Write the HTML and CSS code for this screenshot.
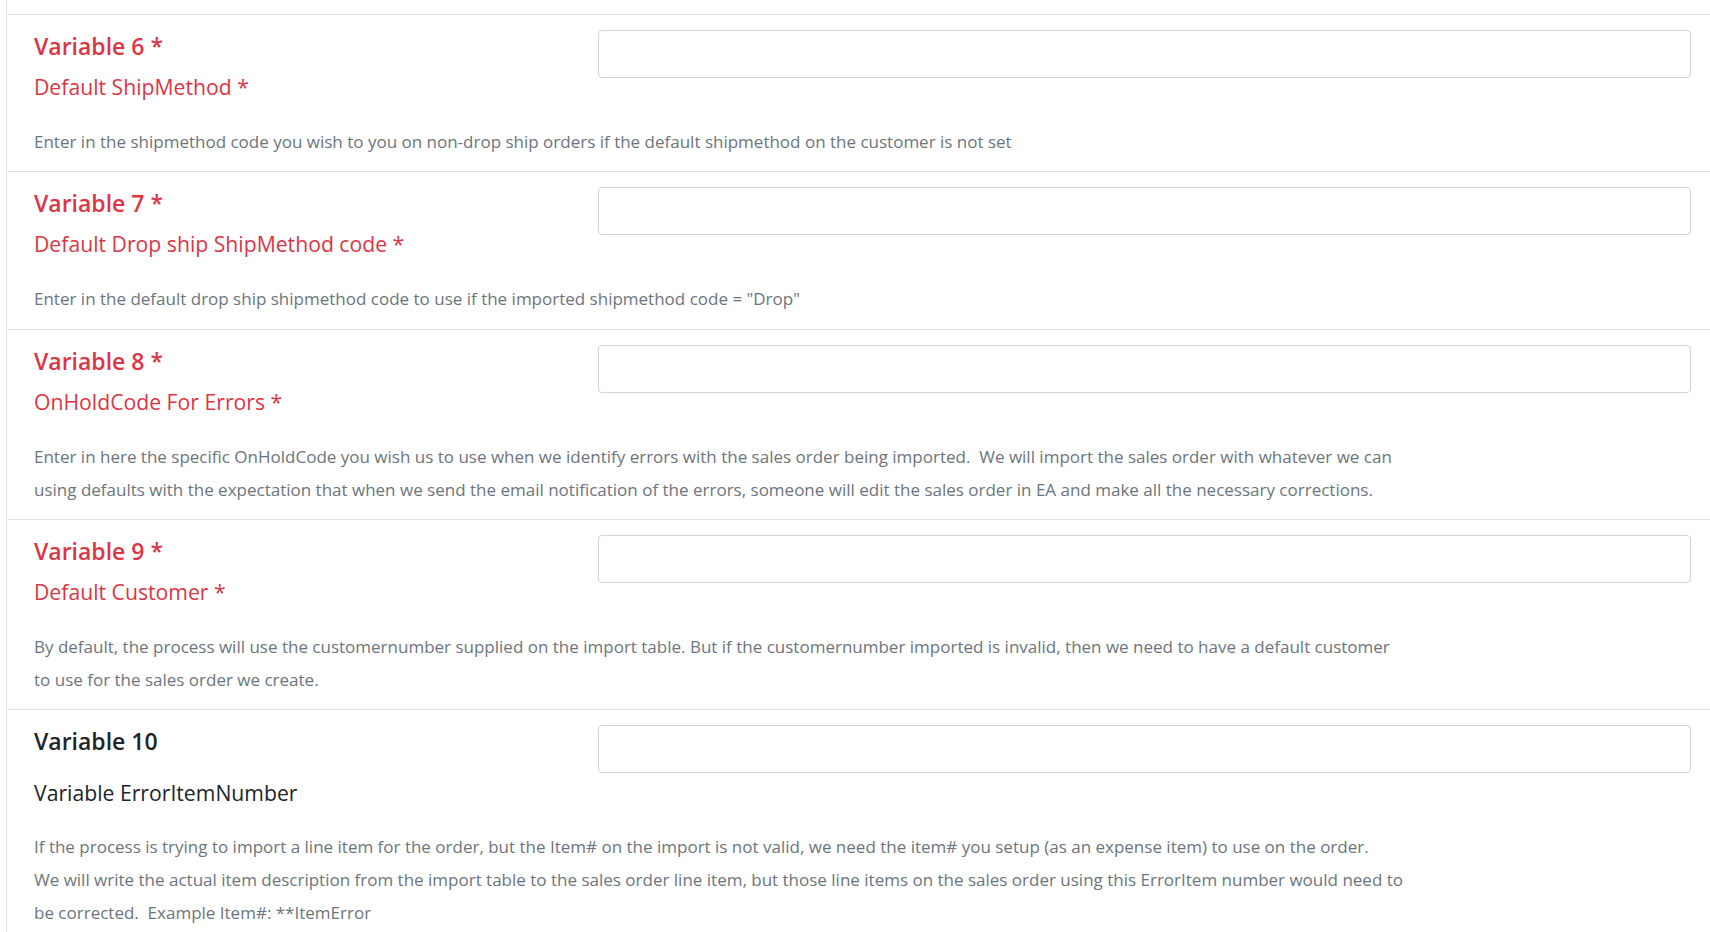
FILE: index.html
```html
<!DOCTYPE html>
<html lang="en">
<head>
    <meta charset="UTF-8">
    <meta name="viewport" content="width=device-width, initial-scale=1.0">
    <title>Process Variables</title>
    <link rel="stylesheet" href="styles.css">
</head>
<body>
    <div id="variables-panel">
        <div class="var-row">
            <div class="var-head">
                <div class="var-labels">
                    <h5 class="var-title required">Variable 6 *</h5>
                    <label class="var-name required" for="var6">Default ShipMethod *</label>
                </div>
                <input type="text" id="var6" class="var-input">
            </div>
            <p class="var-desc">Enter in the shipmethod code you wish to you on non-drop ship orders if the default shipmethod on the customer is not set</p>
        </div>

        <div class="var-row">
            <div class="var-head">
                <div class="var-labels">
                    <h5 class="var-title required">Variable 7 *</h5>
                    <label class="var-name required" for="var7">Default Drop ship ShipMethod code *</label>
                </div>
                <input type="text" id="var7" class="var-input">
            </div>
            <p class="var-desc">Enter in the default drop ship shipmethod code to use if the imported shipmethod code = "Drop"</p>
        </div>

        <div class="var-row">
            <div class="var-head">
                <div class="var-labels">
                    <h5 class="var-title required">Variable 8 *</h5>
                    <label class="var-name required" for="var8">OnHoldCode For Errors *</label>
                </div>
                <input type="text" id="var8" class="var-input">
            </div>
            <p class="var-desc">Enter in here the specific OnHoldCode you wish us to use when we identify errors with the sales order being imported.&nbsp; We will import the sales order with whatever we can<br>using defaults with the expectation that when we send the email notification of the errors, someone will edit the sales order in EA and make all the necessary corrections.</p>
        </div>

        <div class="var-row">
            <div class="var-head">
                <div class="var-labels">
                    <h5 class="var-title required">Variable 9 *</h5>
                    <label class="var-name required" for="var9">Default Customer *</label>
                </div>
                <input type="text" id="var9" class="var-input">
            </div>
            <p class="var-desc">By default, the process will use the customernumber supplied on the import table. But if the customernumber imported is invalid, then we need to have a default customer<br>to use for the sales order we create.</p>
        </div>

        <div class="var-row optional">
            <div class="var-head">
                <div class="var-labels">
                    <h5 class="var-title">Variable 10</h5>
                    <label class="var-name" for="var10">Variable ErrorItemNumber</label>
                </div>
                <input type="text" id="var10" class="var-input">
            </div>
            <p class="var-desc">If the process is trying to import a line item for the order, but the Item# on the import is not valid, we need the item# you setup (as an expense item) to use on the order.<br>We will write the actual item description from the import table to the sales order line item, but those line items on the sales order using this ErrorItem number would need to<br>be corrected.&nbsp; Example Item#: **ItemError</p>
        </div>
    </div>
</body>
</html>
```

FILE: styles.css
```css
:root {
    --text-color: #212529;
    --muted-color: #6c757d;
    --danger-color: #dc3545;
    --line-color: #dee2e6;
    --input-border: #ced4da;
}

* {
    margin: 0;
    padding: 0;
    box-sizing: border-box;
}

body {
    font-family: 'Open Sans', 'Noto Sans', sans-serif;
    background-color: #ffffff;
    color: var(--text-color);
}

#variables-panel {
    margin-left: 6px;
    padding-top: 14px;
    min-height: 100vh;
    border-left: 1px solid var(--line-color);
}

.var-row {
    border-top: 1px solid var(--line-color);
    padding: 15px 19px 13.3px 27px;
}

.var-head {
    display: grid;
    grid-template-columns: 564px 1fr;
    align-items: start;
}

.var-labels {
    display: flex;
    flex-direction: column;
    align-items: flex-start;
}

.var-title {
    margin-top: 3px;
    font-size: 23px;
    font-weight: 600;
    line-height: 27px;
}

.var-name {
    margin-top: 11px;
    font-size: 21.2px;
    font-weight: 400;
    line-height: 32px;
}

.required {
    color: var(--danger-color);
}

.var-input {
    display: block;
    width: 100%;
    height: 48px;
    padding: 6px 12px;
    font-family: inherit;
    font-size: 16px;
    border: 1px solid var(--input-border);
    border-radius: 4px;
    background-color: #ffffff;
}

.var-desc {
    max-width: 1420px;
    margin-top: 22px;
    font-size: 17px;
    line-height: 33px;
    color: var(--muted-color);
}

.optional .var-name {
    margin-top: 22px;
}

.optional .var-desc {
    margin-top: 21px;
}
```
